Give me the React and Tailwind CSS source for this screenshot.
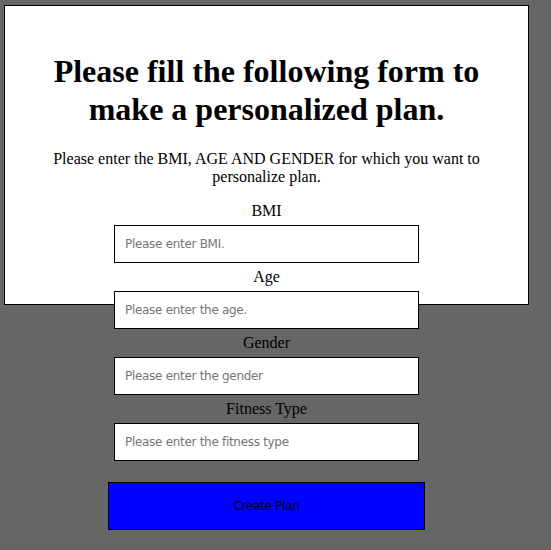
export default function App() {
  const fields = [
    { label: 'BMI', placeholder: 'Please enter BMI.' },
    { label: 'Age', placeholder: 'Please enter the age.' },
    { label: 'Gender', placeholder: 'Please enter the gender' },
    { label: 'Fitness Type', placeholder: 'Please enter the fitness type' },
  ]

  return (
    <div className="min-h-screen bg-[#666666] pt-[5px] pl-[4px] font-['Liberation_Serif',serif] text-black">
      {/* card — the form spills out below it */}
      <div className="w-[525px] h-[300px] bg-white border border-black flex flex-col items-center px-10">
        <h1 className="mt-[46px] text-[32px] leading-[38px] font-bold text-center">
          Please fill the following form to make a personalized plan.
        </h1>
        <p className="mt-[22px] text-base leading-[18px] text-center">
          Please enter the BMI, AGE AND GENDER for which you want to personalize plan.
        </p>
        <form className="mt-[11px] flex flex-col items-center" onSubmit={(e) => e.preventDefault()}>
          {fields.map((f) => (
            <div key={f.label} className="flex flex-col items-center">
              <label className="h-[28px] flex items-center text-base">{f.label}</label>
              <input
                type="text"
                placeholder={f.placeholder}
                className="w-[305px] h-[38px] bg-white border border-black px-[10px] text-[12px] tracking-[-0.3px] font-['DejaVu_Sans',sans-serif] placeholder:text-[#757575] outline-none"
              />
            </div>
          ))}
          <button
            type="submit"
            className="mt-[21px] w-[317px] h-[48px] bg-[#0000ff] border border-black text-[12px] tracking-[-0.3px] font-['DejaVu_Sans',sans-serif] text-black"
          >
            Create Plan
          </button>
        </form>
      </div>
    </div>
  )
}
